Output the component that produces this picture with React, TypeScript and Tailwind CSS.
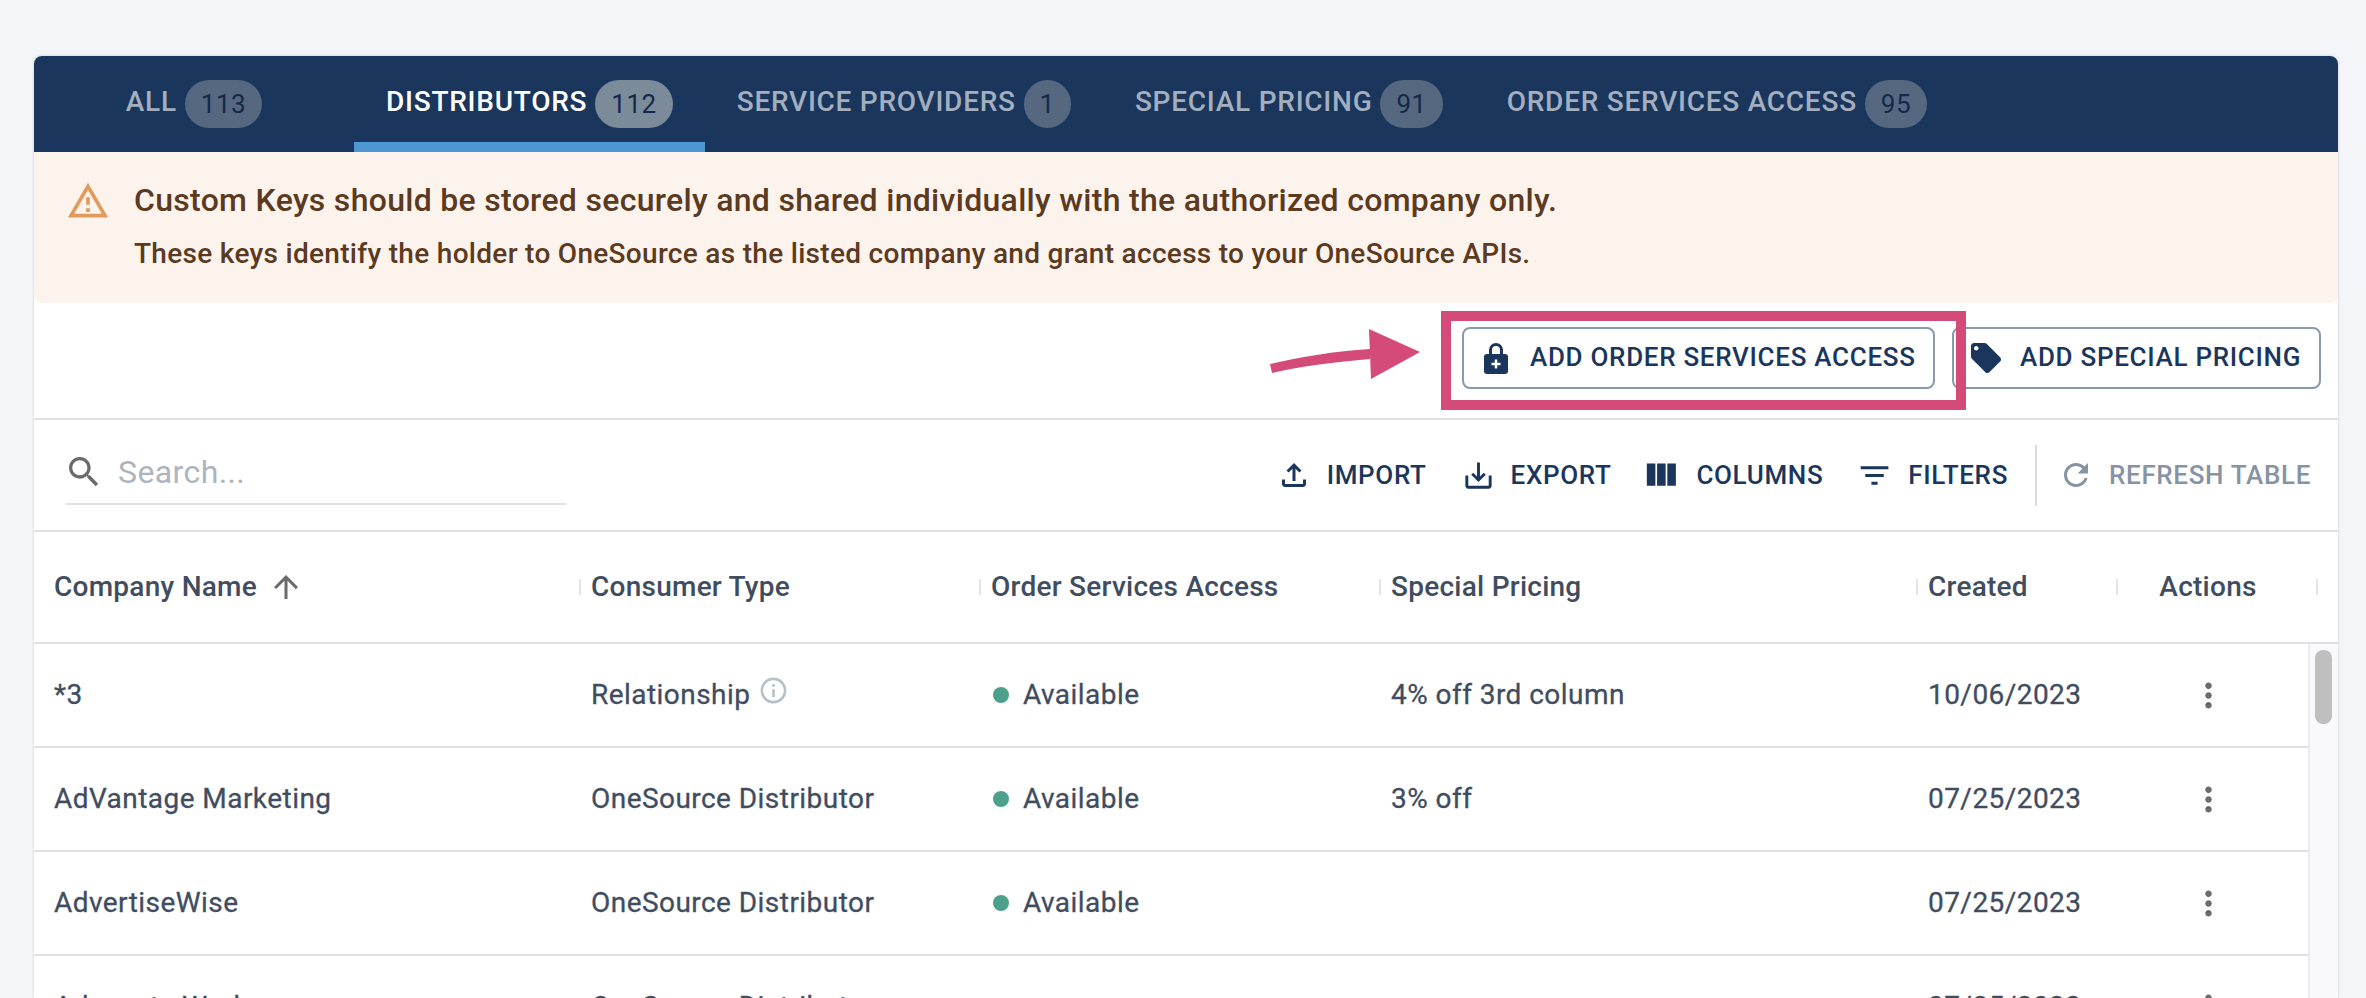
import React from "react";

const tabs = [
  { label: "ALL", count: "113", first: true },
  { label: "DISTRIBUTORS", count: "112", active: true },
  { label: "SERVICE PROVIDERS", count: "1" },
  { label: "SPECIAL PRICING", count: "91" },
  { label: "ORDER SERVICES ACCESS", count: "95" },
];

const rows = [
  { name: "*3", type: "Relationship", info: true, access: "Available", pricing: "4% off 3rd column", created: "10/06/2023" },
  { name: "AdVantage Marketing", type: "OneSource Distributor", access: "Available", pricing: "3% off", created: "07/25/2023" },
  { name: "AdvertiseWise", type: "OneSource Distributor", access: "Available", pricing: "", created: "07/25/2023" },
  { name: "Advocate Works", type: "OneSource Distributor", access: "", pricing: "", created: "07/25/2023" },
];

const cols = "grid grid-cols-[547px_400px_400px_537px_200px_200px]";

// material icons, size picked so the glyph matches the screenshot
function Mi({ d, size, className }: { d: string; size: number; className?: string }) {
  return (
    <svg width={size} height={size} viewBox="0 0 24 24" fill="currentColor" className={`shrink-0 ${className ?? ""}`}>
      <path d={d} />
    </svg>
  );
}

const icons = {
  upload: "M18 15v3H6v-3H4v3c0 1.1.9 2 2 2h12c1.1 0 2-.9 2-2v-3h-2zM7 9l1.41 1.41L11 7.83V16h2V7.83l2.59 2.58L17 9l-5-5-5 5z",
  save: "M19 12v7H5v-7H3v7c0 1.1.9 2 2 2h14c1.1 0 2-.9 2-2v-7h-2zm-6 .67l2.59-2.58L17 11.5l-5 5-5-5 1.41-1.41L11 12.67V3h2z",
  columns: "M10 18h5V5h-5v13zm-6 0h5V5H4v13zM16 5v13h5V5h-5z",
  filter: "M10 18h4v-2h-4v2zM3 6v2h18V6H3zm3 7h12v-2H6v2z",
  refresh: "M17.65 6.35C16.2 4.9 14.21 4 12 4c-4.42 0-7.99 3.58-7.99 8s3.57 8 7.99 8c3.73 0 6.84-2.55 7.73-6h-2.08c-.82 2.33-3.04 4-5.65 4-3.31 0-6-2.69-6-6s2.69-6 6-6c1.66 0 3.14.69 4.22 1.78L13 11h7V4l-2.35 2.35z",
  search: "M15.5 14h-.79l-.28-.27C15.41 12.59 16 11.11 16 9.5 16 5.91 13.09 3 9.5 3S3 5.91 3 9.5 5.91 16 9.5 16c1.61 0 3.09-.59 4.23-1.57l.27.28v.79l5 4.99L20.49 19l-4.99-5zm-6 0C7.01 14 5 11.99 5 9.5S7.01 5 9.5 5 14 7.01 14 9.5 11.99 14 9.5 14z",
  arrowUp: "M4 12l1.41 1.41L11 7.83V20h2V7.83l5.58 5.59L20 12l-8-8-8 8z",
  info: "M11 7h2v2h-2zm0 4h2v6h-2zm1-9C6.48 2 2 6.48 2 12s4.48 10 10 10 10-4.48 10-10S17.52 2 12 2zm0 18c-4.41 0-8-3.59-8-8s3.59-8 8-8 8 3.59 8 8-3.59 8-8 8z",
  more: "M12 8c1.1 0 2-.9 2-2s-.9-2-2-2-2 .9-2 2 .9 2 2 2zm0 2c-1.1 0-2 .9-2 2s.9 2 2 2 2-.9 2-2-.9-2-2-2zm0 6c-1.1 0-2 .9-2 2s.9 2 2 2 2-.9 2-2-.9-2-2-2z",
  warning: "M12 5.99L19.53 19H4.47L12 5.99M12 2L1 21h22L12 2zm1 14h-2v2h2v-2zm0-6h-2v4h2v-4z",
  tag: "M21.41 11.58l-9-9C12.05 2.22 11.55 2 11 2H4c-1.1 0-2 .9-2 2v7c0 .55.22 1.05.59 1.42l9 9c.36.36.86.58 1.41.58s1.05-.22 1.41-.59l7-7c.37-.36.59-.86.59-1.41s-.23-1.06-.59-1.42zM5.5 7C4.67 7 4 6.33 4 5.5S4.67 4 5.5 4 7 4.67 7 5.5 6.33 7 5.5 7z",
};

function ToolBtn({ icon, label, muted, className }: { icon: React.ReactNode; label: string; muted?: boolean; className?: string }) {
  return (
    <button className={`flex items-center gap-[15px] text-[26px] font-medium tracking-[0.65px] ${muted ? "text-[#8593a3]" : "text-[#1a365d]"} ${className ?? ""}`}>
      {icon}
      {label}
    </button>
  );
}

function HeaderCell({ label, first, center, children }: { label: string; first?: boolean; center?: boolean; children?: React.ReactNode }) {
  return (
    <div className={`relative flex h-full items-center ${first ? "pl-5" : "pl-2.5"} ${center ? "justify-center pl-0 pr-[30px]" : ""}`}>
      <span className="text-[28px] font-medium tracking-[0.25px] text-[#414d5f]">{label}</span>
      {children}
      <span className="absolute right-0 top-[50%] -mt-[8px] h-[16px] w-[2px] bg-[#e4e4e4]" />
    </div>
  );
}

export default function App() {
  return (
    <div className="h-[998px] overflow-hidden bg-[#f3f5f9] pl-[34px] pr-7 pt-14 font-['Roboto',sans-serif]">
      <div className="relative h-[942px] overflow-hidden rounded-t-lg bg-white shadow-[0_0_3px_rgba(30,50,90,0.2)]">
        <div className="flex h-24 bg-[#1a365d]">
          {tabs.map((t) => (
            <div key={t.label} className={`relative flex items-start justify-center px-8 pt-6 ${t.first ? "w-[320px]" : ""}`}>
              <span className={`mt-1 text-[28px] font-medium leading-[36px] tracking-[0.75px] ${t.active ? "text-white" : "text-[#a3aebe]"}`}>{t.label}</span>
              <span className={`ml-2 flex h-12 items-center justify-center rounded-3xl px-4 text-[26px] leading-none tracking-[0.5px] text-[#14294a] ${t.active ? "bg-[#7c8b9a]" : "bg-[#55687f]"}`}>{t.count}</span>
              {t.active && <span className="absolute bottom-0 left-0 right-0 h-2.5 bg-[#4f97d3]" />}
            </div>
          ))}
        </div>

        <div className="flex h-[151px] gap-6 rounded-b-lg bg-[#fcf3ed] pl-8 pt-[27px] text-[#5b3a1f]">
          <Mi d={icons.warning} size={44} className="text-[#e29a5b]" />
          <div className="pt-[1px]">
            <div className="text-[32px] font-medium leading-[40px] tracking-[0.3px]">Custom Keys should be stored securely and shared individually with the authorized company only.</div>
            <div className="mt-4 text-[28px] font-medium leading-[36px] tracking-[0.3px]">These keys identify the holder to OneSource as the listed company and grant access to your OneSource APIs.</div>
          </div>
        </div>

        <div className="flex h-[117px] items-start justify-end gap-[17px] border-b-2 border-[#e0e0e0] pr-[17px] pt-6">
          <button className="flex h-[62px] w-[473px] items-center gap-[22px] rounded-lg border-2 border-[#8a99ae] pb-[2px] pl-5 text-[26px] font-medium tracking-[0.7px] text-[#1a365d]">
            <svg width="24" height="31" viewBox="0 0 24 31" className="mt-[2px] shrink-0">
              <rect x="0" y="11" width="24" height="20" rx="3" fill="#1a365d" />
              <path d="M6.5 12V7a5.5 5.5 0 0 1 11 0v5" fill="none" stroke="#1a365d" strokeWidth="3" />
              <path d="M12 16.5v9M7.5 21h9" stroke="#fff" strokeWidth="2.5" />
            </svg>
            ADD ORDER SERVICES ACCESS
          </button>
          <button className="flex h-[62px] w-[369px] items-center gap-4 rounded-lg border-2 border-[#8a99ae] pb-[2px] pl-[14px] text-[26px] font-medium tracking-[0.7px] text-[#1a365d]">
            <Mi d={icons.tag} size={36} className="mt-[2px]" />
            ADD SPECIAL PRICING
          </button>
        </div>

        <div className="flex h-[112px] items-center border-b-2 border-[#e0e0e0] pl-8 pr-[27px]">
          <div className="flex h-[60px] w-[500px] items-center gap-[14px] border-b-2 border-[#e0e0e0] pb-[5px]">
            <Mi d={icons.search} size={40} className="-ml-[2px] text-[#6b6b6b]" />
            <span className="text-[32px] tracking-[0.4px] text-[#aeb4bd]">Search...</span>
          </div>
          <div className="ml-auto flex items-center">
            <ToolBtn label="IMPORT" icon={<Mi d={icons.upload} size={36} />} />
            <ToolBtn label="EXPORT" className="ml-[34px]" icon={<Mi d={icons.save} size={35} />} />
            <ToolBtn label="COLUMNS" className="ml-[29px]" icon={<Mi d={icons.columns} size={41} />} />
            <ToolBtn label="FILTERS" className="ml-[33px]" icon={<Mi d={icons.filter} size={37} />} />
            <div className="ml-[27px] mr-[21px] h-[61px] w-[2px] bg-[#d8dbdf]" />
            <ToolBtn muted label="REFRESH TABLE" icon={<Mi d={icons.refresh} size={36} />} />
          </div>
        </div>

        <div className={`${cols} h-[112px] border-b-2 border-[#e0e0e0]`}>
          <HeaderCell label="Company Name" first>
            <Mi d={icons.arrowUp} size={36} className="ml-[11px] text-[#6b6b6b]" />
          </HeaderCell>
          <HeaderCell label="Consumer Type" />
          <HeaderCell label="Order Services Access" />
          <HeaderCell label="Special Pricing" />
          <HeaderCell label="Created" />
          <HeaderCell label="Actions" center />
        </div>

        <div className="flex">
          <div className="min-w-0 flex-1">
            {rows.map((r) => (
              <div key={r.name} className={`${cols} h-[104px] items-center border-b-2 border-[#e0e0e0] text-[28px] tracking-[0.45px] text-[#414d5f] [-webkit-text-stroke:0.3px]`}>
                <div className="pl-5">{r.name}</div>
                <div className="flex items-center gap-2 pl-2.5">
                  {r.type}
                  {r.info && <Mi d={icons.info} size={31} className="-mt-2.5 text-[#b5c0c9]" />}
                </div>
                <div className="flex items-center gap-[14px] pl-2.5">
                  {r.access && <span className="ml-[2px] h-4 w-4 rounded-full bg-[#4ca18c]" />}
                  {r.access}
                </div>
                <div className="pl-2.5">{r.pricing}</div>
                <div className="pl-2.5">{r.created}</div>
                <div className="flex justify-center pr-5">
                  <Mi d={icons.more} size={39} className="text-[#6b6b6b]" />
                </div>
              </div>
            ))}
          </div>
          <div className="w-[30px] shrink-0 border-l-2 border-[#ececf0] bg-[#f9f9fb] pl-[5px] pt-[6px]">
            <div className="h-[74px] w-[17px] rounded-lg bg-[#bfbfbf]" />
          </div>
        </div>
      </div>

      {/* annotation over the button */}
      <div className="absolute left-[1441px] top-[311px] h-[99px] w-[525px] border-[10px] border-[#d44a79]" />
      <svg className="absolute left-[1260px] top-[325px]" width="165" height="65" viewBox="0 0 165 65">
        <path d="M10 39 C40 32 75 26 110 24 V34 C75 37 42 41 12 48 Z" fill="#d44a79" />
        <path d="M109 4 L160 27 L111 54 Z" fill="#d44a79" />
      </svg>
    </div>
  );
}
